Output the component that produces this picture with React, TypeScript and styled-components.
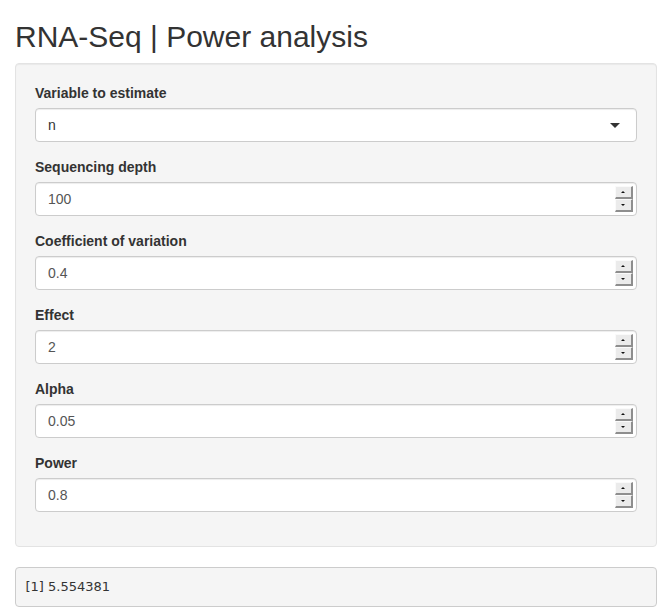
import React from 'react';
import styled, { createGlobalStyle } from 'styled-components';

const GlobalStyle = createGlobalStyle`
  * { box-sizing: border-box; }
  body {
    margin: 0;
    background: #fff;
    color: #333;
    font-family: "Liberation Sans", Arial, sans-serif;
    font-size: 14px;
    line-height: 1.42857143;
  }
`;

const Page = styled.div`
  padding: 0 15px;
`;

const Title = styled.h2`
  margin: 20px 0 10px;
  font-size: 30px;
  font-weight: 500;
  line-height: 1.1;
  color: #333;
`;

const Well = styled.form`
  min-height: 20px;
  padding: 19px;
  margin-bottom: 20px;
  background: #f5f5f5;
  border: 1px solid #e3e3e3;
  border-radius: 4px;
  box-shadow: inset 0 1px 1px rgba(0, 0, 0, 0.05);
`;

const FormGroup = styled.div`
  margin-bottom: 15px;
`;

const Label = styled.label`
  display: block;
  margin-bottom: 5px;
  font-weight: 700;
  color: #333;
`;

const Field = styled.div`
  position: relative;
  height: 34px;
  background: #fff;
  border: 1px solid #ccc;
  border-radius: 4px;
  box-shadow: inset 0 1px 1px rgba(0, 0, 0, 0.075);
`;

const Input = styled.input`
  width: 100%;
  height: 100%;
  padding: 6px 12px;
  border: 0;
  background: transparent;
  font: inherit;
  color: ${(p: { $dark?: boolean }) => (p.$dark ? '#333' : '#555')};
  outline: none;
  -moz-appearance: textfield;
  &::-webkit-inner-spin-button,
  &::-webkit-outer-spin-button {
    -webkit-appearance: none;
    margin: 0;
  }
`;

const Caret = styled.span`
  position: absolute;
  right: 16px;
  top: 50%;
  margin-top: -2px;
  width: 0;
  height: 0;
  border-style: solid;
  border-width: 5px 5px 0 5px;
  border-color: #333 transparent transparent transparent;
`;

const Spinner = styled.div`
  position: absolute;
  right: 3px;
  top: 3px;
  display: flex;
  flex-direction: column;
  width: 18px;
`;

const SpinButton = styled.span`
  position: relative;
  height: 13px;
  background: #ebebeb;
  border-style: solid;
  border-width: 1px 2px 2px 1px;
  border-color: #fafafa #8e8e8e #8e8e8e #fafafa;

  &:after {
    content: '';
    position: absolute;
    left: 50%;
    top: 50%;
    margin-left: -3px;
    margin-top: -1px;
    border-style: solid;
    border-color: transparent;
    ${(p: { $up?: boolean }) =>
      p.$up
        ? 'border-width: 0 2.5px 2.5px 2.5px; border-bottom-color: #111;'
        : 'border-width: 2.5px 2.5px 0 2.5px; border-top-color: #111;'}
  }
`;

const Output = styled.pre`
  margin: 0 0 10px;
  padding: 9.5px;
  font-family: "DejaVu Sans", "Liberation Sans", sans-serif;
  font-size: 13px;
  line-height: 1.42857143;
  color: #333;
  background: #f5f5f5;
  border: 1px solid #ccc;
  border-radius: 4px;
  white-space: pre-wrap;
`;

const numbers = [
  { label: 'Sequencing depth', value: '100' },
  { label: 'Coefficient of variation', value: '0.4' },
  { label: 'Effect', value: '2' },
  { label: 'Alpha', value: '0.05' },
  { label: 'Power', value: '0.8' },
];

const App = () => (
  <Page>
    <GlobalStyle />
    <Title>RNA-Seq | Power analysis</Title>
    <Well onSubmit={(e) => e.preventDefault()}>
      <FormGroup>
        <Label>Variable to estimate</Label>
        <Field>
          <Input $dark readOnly defaultValue="n" />
          <Caret />
        </Field>
      </FormGroup>
      {numbers.map((n) => (
        <FormGroup key={n.label}>
          <Label>{n.label}</Label>
          <Field>
            <Input type="number" defaultValue={n.value} />
            <Spinner>
              <SpinButton $up />
              <SpinButton />
            </Spinner>
          </Field>
        </FormGroup>
      ))}
    </Well>
    <Output>[1] 5.554381</Output>
  </Page>
);

export default App;
